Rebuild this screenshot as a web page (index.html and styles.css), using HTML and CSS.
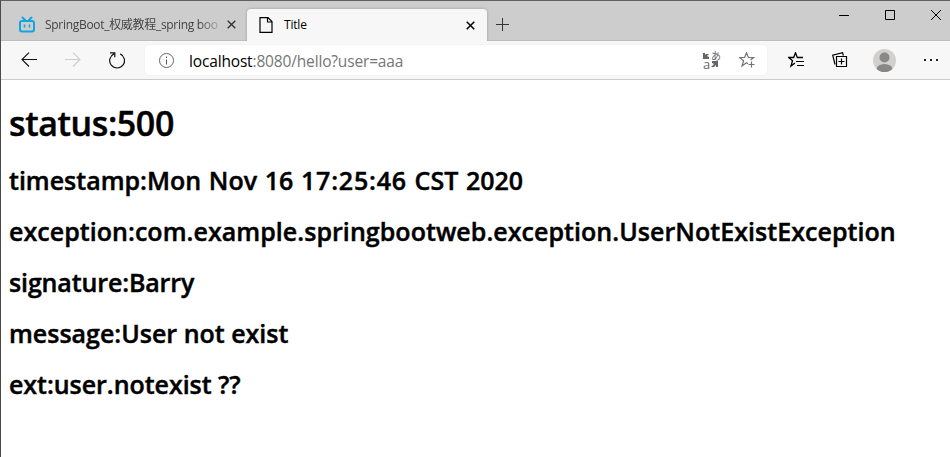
FILE: index.html
```html
<!DOCTYPE html>
<html lang="en">
<head>
<meta charset="utf-8">
<title>Title</title>
<link rel="stylesheet" href="styles.css">
</head>
<body>
<div class="window">
  <header class="tabstrip">
    <div class="tab">
      <svg class="favicon" width="18" height="18" viewBox="0 0 18 18"><rect x="2" y="5" width="14" height="10.500" rx="2" fill="none" stroke="#14a4de" stroke-width="2"/><path d="M4.500 1.500 7 4M13.500 1.500 11 4" stroke="#14a4de" stroke-width="2" stroke-linecap="round"/><path d="M6.500 8.500v3M11.500 8.500v3" stroke="#14a4de" stroke-width="1.600"/></svg>
      <span class="tab-title fade">SpringBoot_权威教程_spring boo</span>
      <svg class="close" width="9" height="9" viewBox="0 0 9 9"><path d="M.7.7l7.600 7.600M8.300.7.7 8.300" stroke="#333" stroke-width="1.400"/></svg>
    </div>
    <div class="tab active">
      <svg class="page-icon" width="14" height="16" viewBox="0 0 14 16"><path d="M1 .6h8l4 4v10.800H1zM8.500.5v4.500H13" fill="none" stroke="#000" stroke-width="1.200"/></svg>
      <span class="tab-title">Title</span>
      <svg class="close" width="9" height="9" viewBox="0 0 9 9"><path d="M.7.7l7.600 7.600M8.300.7.7 8.300" stroke="#000" stroke-width="1.500"/></svg>
    </div>
    <svg class="new-tab" width="13" height="13" viewBox="0 0 13 13"><path d="M6.500 0v13M0 6.500h13" stroke="#333"/></svg>
    <div class="controls">
      <svg width="10" height="10" viewBox="0 0 10 10"><path d="M0 5.500h10" stroke="#000"/></svg>
      <svg width="10" height="10" viewBox="0 0 10 10"><path d="M.5.5h9v9h-9z" fill="none" stroke="#000"/></svg>
      <svg width="10" height="10" viewBox="0 0 10 10"><path d="M0 0l10 10M10 0 0 10" stroke="#000"/></svg>
    </div>
  </header>
  <nav class="toolbar">
    <svg class="back" width="16" height="16" viewBox="0 0 16 16"><path d="M16 7.500H1M8 .7 1 7.500l7 7" fill="none" stroke="#111" stroke-width="1.100"/></svg>
    <svg class="forward" width="16" height="16" viewBox="0 0 16 16"><path d="M0 7.500h15M8 .7l7 6.800-7 7" fill="none" stroke="#ccc" stroke-width="1.100"/></svg>
    <svg class="reload" width="16" height="17" viewBox="0 0 16 17"><path d="M11.200 1.900A7.400 7.400 0 1 1 5 1.900M1 .8h4.800v4.500" fill="none" stroke="#111" stroke-width="1.200"/></svg>
    <div class="address">
      <svg class="info" width="15" height="15" viewBox="0 0 15 15"><circle cx="7.500" cy="7.500" r="7" fill="none" stroke="#666"/><path d="M7.500 6.500v5M7.500 3.500V5" stroke="#555"/></svg>
      <span class="url"><b>localhost</b>:8080/hello?user=aaa</span>
      <span class="translate">
        <svg width="7" height="6" viewBox="0 0 7 6"><path d="M0 0h2v2l1-1h3L4 3l2 1v2H0z" fill="#666"/></svg><span>あ</span>
        <span class="latin">a</span><svg width="7" height="6" viewBox="0 0 7 6"><path d="M1 0h6v6H5V4L3 6H0l3-3-2-1z" fill="#666"/></svg>
      </span>
      <svg class="star" width="17" height="16" viewBox="0 0 17 16"><path d="M9 11.700 7.500 10.700 3 14l1.600-5.300L.6 5.500h5L7.500.7l1.900 4.800h5.200L11.500 8M12.500 9.500v6M9.500 12.500h6" fill="none" stroke="#737373" stroke-width="1.200"/></svg>
    </div>
    <svg class="favorites" width="17" height="16" viewBox="0 0 17 16"><path d="M7 11 3 14l1.500-5.300L.8 5.500h4.900L7.500.7l1.800 4.800H15" fill="none" stroke="#000" stroke-width="1.300"/><path d="M9 5.500h6M8 9.500h8M9 13.500h7" stroke="#000" stroke-width="1.200"/></svg>
    <svg class="collections" width="16" height="16" viewBox="0 0 16 16"><path d="M3 12.500.7 3.200 10.600.7l.7 3M4.500 4.500h10v10h-10zM9.500 6.500v6M6.500 9.500h6" fill="none" stroke="#000" stroke-width="1.200"/></svg>
    <svg class="avatar" width="23" height="23" viewBox="0 0 23 23"><defs><clipPath id="disc"><circle cx="11.500" cy="11.500" r="11.500"/></clipPath></defs><g clip-path="url(#disc)"><path fill="#d2d0ce" d="M0 0h23v23H0z"/><circle cx="11.500" cy="8.500" r="5" fill="#8a8886"/><ellipse cx="11.500" cy="20.500" rx="8" ry="5.500" fill="#8a8886"/></g></svg>
    <svg class="more" width="15" height="2" viewBox="0 0 15 2"><path d="M0 0h2v2H0zM6 0h2v2H6zM12 0h2v2h-2z" fill="#222"/></svg>
  </nav>
  <main>
    <h1>status:500</h1>
    <h2 class="timestamp">timestamp:Mon Nov 16 <span class="time">17:25:46</span> CST 2020</h2>
    <h2 class="exception">exception:com.example.springbootweb.exception.UserNotExistException</h2>
    <h2 class="signature">signature:Barry</h2>
    <h2 class="message">message:User not exist</h2>
    <h2 class="ext">ext:user.notexist ??</h2>
  </main>
</div>
</body>
</html>
```
FILE: styles.css
```css
* { box-sizing: border-box; }
body { margin: 0; background: #fff; font-family: "Open Sans", "Noto Sans CJK SC", sans-serif; }
svg { display: block; flex: none; }
.window { height: 457px; border-left: 1px solid #4b494b; border-top: 1px solid #626062; overflow: hidden; }
.tabstrip { height: 40px; display: flex; background: #cdcdcd; border-bottom: 1px solid #bebebe; }
.tab { height: 31px; margin-top: 8px; display: flex; align-items: center; color: #444; width: 246px; padding: 0 11px 0 17px; }
.tab-title { flex: 1; white-space: nowrap; line-height: 20px; font-size: 12px; letter-spacing: -.2px; }
.fade { margin: 0 7px 0 9px; letter-spacing: -.3px; -webkit-mask-image: linear-gradient(90deg, #000 88%, #0003); mask-image: linear-gradient(90deg, #000 88%, #0003); }
.active { height: 32px; width: 240px; padding: 0 12px; background: #f7f7f7; color: #000; border-radius: 4px 4px 0 0; box-shadow: 0 0 3px #0004; clip-path: inset(-4px -4px 0); }
.active .tab-title { margin-left: 11px; }
.new-tab { margin: 17px 0 0 9px; }
.controls { margin: 9px 9px 0 auto; display: flex; gap: 36px; }
.toolbar { height: 39px; display: flex; align-items: center; background: #f7f7f7; border-bottom: 1px solid #ccc; padding-left: 20px; }
.forward { margin-left: 28px; }
.reload { margin-left: 28px; }
.address { width: 622px; height: 30px; margin-left: 20px; padding: 0 11px 0 14px; display: flex; align-items: center; background: #fff; border-radius: 4px; box-shadow: 0 0 2px #0001; }
.url { flex: 1; margin-left: 15px; padding-top: 1px; font-size: 15.500px; letter-spacing: -.16px; color: #767676; white-space: nowrap; }
.url b { font-weight: 400; color: #000; }
.translate { width: 16px; display: grid; grid-template-columns: 8px 8px; grid-template-rows: 8px 8px; align-items: center; font: 10px/8px "Noto Sans CJK JP", sans-serif; color: #666; }
.translate .latin { font: 13px/8px "Open Sans", sans-serif; }
.star { margin-left: 20px; }
.favorites { margin-left: 21px; }
.collections { margin-left: 27px; }
.avatar { margin-left: 25px; }
.more { margin-left: 28px; }
main { padding: 21px 8px 0; color: #000; }
h1, h2 { margin: 0; font-weight: 600; white-space: nowrap; -webkit-text-stroke: .45px #000; }
h1 { font-size: 34px; line-height: 45px; margin-bottom: 9px; letter-spacing: -.4px; }
h2 { font-size: 25px; line-height: 51px; }
.timestamp { word-spacing: 1.200px; }
.time { letter-spacing: .8px; }
.exception { letter-spacing: .05px; }
.signature { letter-spacing: -.13px; }
.ext { letter-spacing: -.04px; }
```
